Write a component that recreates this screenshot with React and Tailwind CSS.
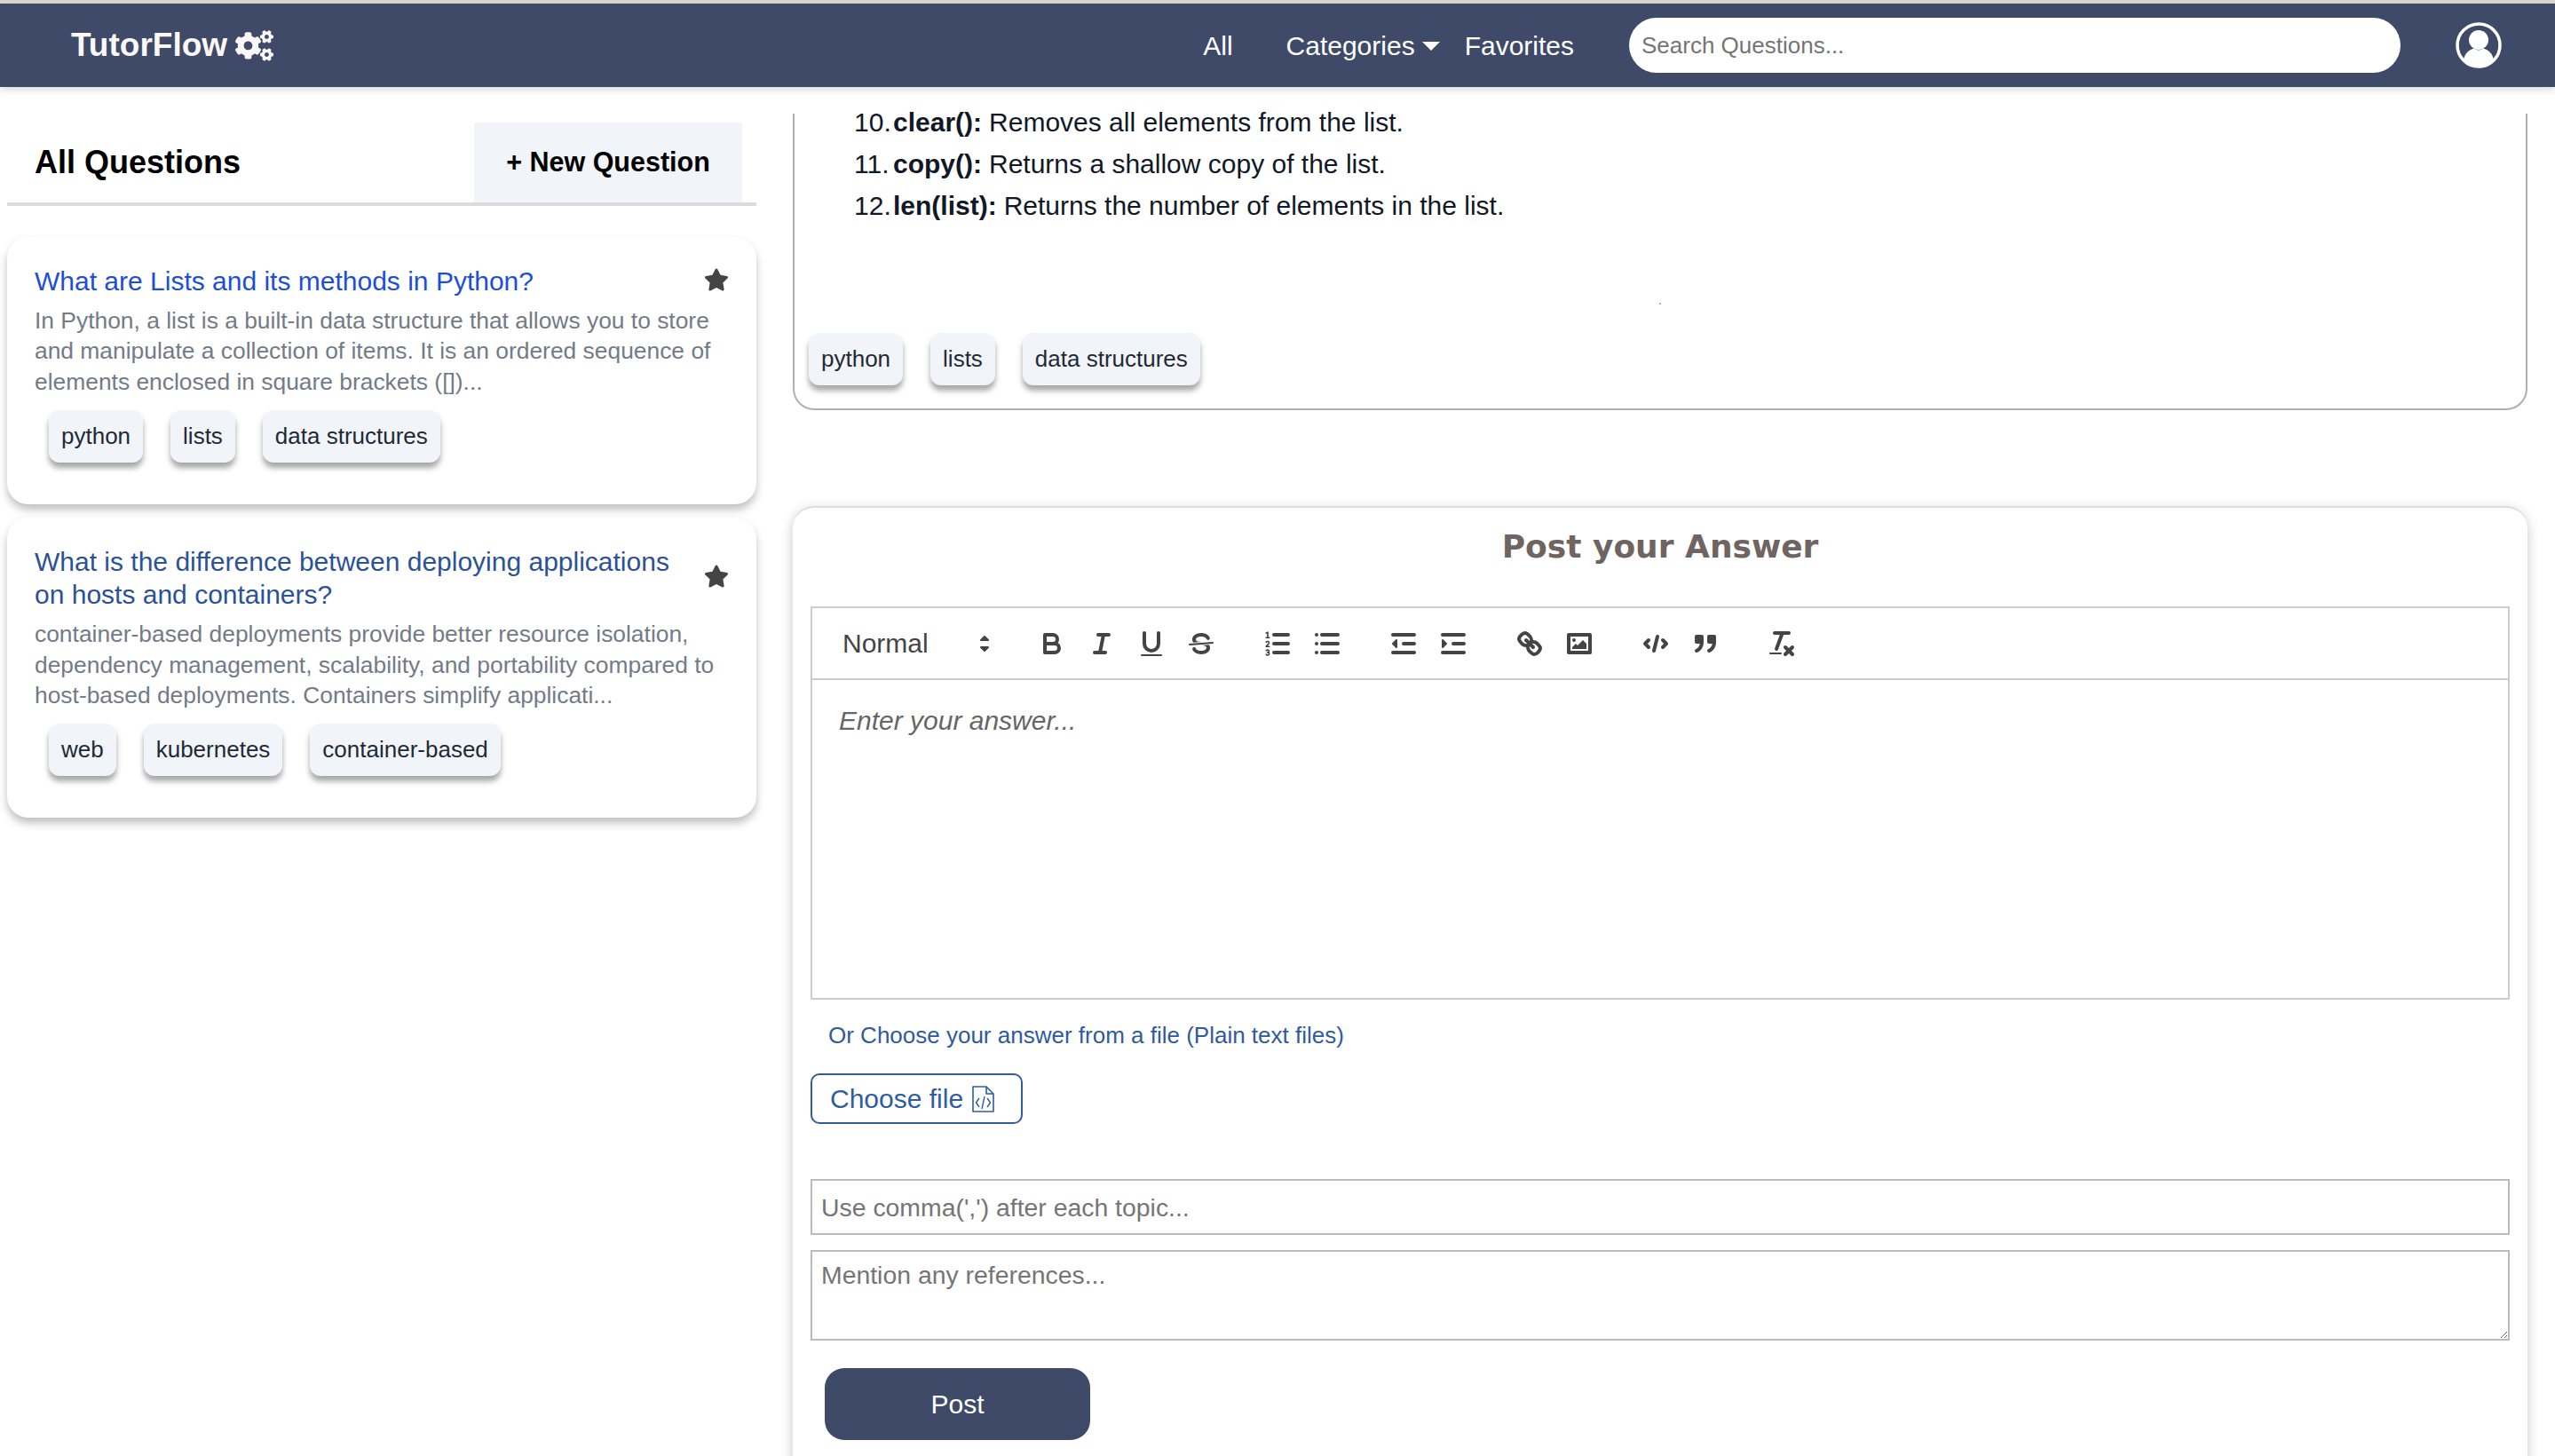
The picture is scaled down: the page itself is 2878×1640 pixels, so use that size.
import React from 'react'
import { FaCogs, FaStar } from 'react-icons/fa'

const Tag = ({ label }) => (
  <span className="h-[59px] px-[14px] flex items-center bg-[#f1f5f9] rounded-[12px] text-[26px] text-[#1f2937] shadow-[0_6px_6px_rgba(0,0,0,0.35)]">
    {label}
  </span>
)

const Tags = ({ items }) => (
  <div className="flex gap-[31px]">
    {items.map((t) => (
      <Tag key={t} label={t} />
    ))}
  </div>
)

const QuestionCard = ({ title, titleColor, body, tags }) => (
  <div className="relative bg-white rounded-[24px] pt-[31px] pb-[47px] pl-[31px] pr-[31px] shadow-[0_6px_10px_rgba(0,0,0,0.25)]">
    <div className="flex items-center justify-between">
      <h3 className={`w-[740px] text-[30px] leading-[37px] ${titleColor}`}>{title}</h3>
      <FaStar className="text-[28px] text-[#444444] shrink-0 mt-[-4px]" />
    </div>
    <p className="mt-[9px] text-[26.4px] leading-[34.4px] text-[#737b88] whitespace-pre-line">{body}</p>
    <div className="mt-[15px] ml-[16px]">
      <Tags items={tags} />
    </div>
  </div>
)

const Icon = ({ children }) => (
  <button className="w-[56px] h-[48px] flex items-center justify-center">
    <svg
      viewBox="0 0 18 18"
      className="w-[36px] h-[36px]"
      fill="none"
      stroke="#444444"
      strokeWidth="2"
      strokeLinecap="round"
      strokeLinejoin="round"
    >
      {children}
    </svg>
  </button>
)

const ListItem = ({ n, name, text }) => (
  <li className="flex h-[47px] items-center text-[30px] text-[#111827]">
    <span className="w-[44px]">{n}.</span>
    <b className="font-bold mr-[8px]">{name}</b>
    <span>{text}</span>
  </li>
)

const Toolbar = () => (
  <div className="flex items-center h-[81px] pl-[16px] border-b-2 border-[#cccccc]">
    <div className="w-[196px] mr-[30px] pl-[18px] flex items-center justify-between text-[30px] text-[#444444]">
      <span>Normal</span>
      <svg viewBox="0 0 18 18" className="w-[36px] h-[36px]" fill="#444444" stroke="#444444" strokeWidth="1" strokeLinejoin="round">
        <polygon points="7 11 9 13 11 11 7 11" />
        <polygon points="7 7 9 5 11 7 7 7" />
      </svg>
    </div>
    <div className="flex mr-[30px]">
      <Icon>
        <path d="M5,4H9.5A2.5,2.5,0,0,1,12,6.5v0A2.5,2.5,0,0,1,9.5,9H5A0,0,0,0,1,5,9V4A0,0,0,0,1,5,4Z" />
        <path d="M5,9h5.5A2.5,2.5,0,0,1,13,11.5v0A2.5,2.5,0,0,1,10.5,14H5a0,0,0,0,1,0,0V9A0,0,0,0,1,5,9Z" />
      </Icon>
      <Icon>
        <line x1="7" x2="13" y1="4" y2="4" />
        <line x1="5" x2="11" y1="14" y2="14" />
        <line x1="8" x2="10" y1="14" y2="4" />
      </Icon>
      <Icon>
        <path d="M5,3V9a4.012,4.012,0,0,0,4,4H9a4.012,4.012,0,0,0,4-4V3" />
        <rect fill="#444444" stroke="none" height="1" rx="0.5" ry="0.5" width="12" x="3" y="15" />
      </Icon>
      <Icon>
        <line strokeWidth="1" x1="15.5" x2="2.5" y1="8.5" y2="9.5" />
        <path fill="#444444" stroke="none" d="M9.007,8C6.542,7.791,6,7.519,6,6.5,6,5.792,7.283,5,9,5c1.571,0,2.765.679,2.969,1.309a1,1,0,0,0,1.9-.617C13.356,4.106,11.354,3,9,3,6.2,3,4,4.538,4,6.5a3.2,3.2,0,0,0,.5,1.843Z" />
        <path fill="#444444" stroke="none" d="M8.984,10C11.457,10.208,12,10.479,12,11.5c0,.708-1.283,1.5-3,1.5-1.571,0-2.765-.679-2.969-1.309a1,1,0,1,0-1.9.617C4.644,13.894,6.646,15,9,15c2.8,0,5-1.538,5-3.5a3.2,3.2,0,0,0-.5-1.843Z" />
      </Icon>
    </div>
    <div className="flex mr-[30px]">
      <Icon>
        <line x1="7" x2="15" y1="4" y2="4" />
        <line x1="7" x2="15" y1="9" y2="9" />
        <line x1="7" x2="15" y1="14" y2="14" />
        <path strokeWidth="0.8" d="M2.6,3L3.5,2.6V5.6M2.6,5.6H4.4" />
        <path strokeWidth="0.8" d="M2.6,8.2C3,7.5,4.4,7.6,4.3,8.6C4.2,9.3,2.9,9.7,2.6,10.6H4.4" />
        <path strokeWidth="0.8" d="M2.6,12.8C3.2,12.3,4.4,12.6,4.2,13.4C4.1,13.8,3.7,13.9,3.3,13.9C3.8,13.9,4.4,14.2,4.3,14.8C4.1,15.6,3,15.6,2.6,15.1" />
      </Icon>
      <Icon>
        <line x1="6" x2="15" y1="4" y2="4" />
        <line x1="6" x2="15" y1="9" y2="9" />
        <line x1="6" x2="15" y1="14" y2="14" />
        <line x1="3" x2="3" y1="4" y2="4" />
        <line x1="3" x2="3" y1="9" y2="9" />
        <line x1="3" x2="3" y1="14" y2="14" />
      </Icon>
    </div>
    <div className="flex mr-[30px]">
      <Icon>
        <line x1="3" x2="15" y1="14" y2="14" />
        <line x1="3" x2="15" y1="4" y2="4" />
        <line x1="9" x2="15" y1="9" y2="9" />
        <polygon fill="#444444" strokeWidth="1" points="5 7 5 11 3 9 5 7" />
      </Icon>
      <Icon>
        <line x1="3" x2="15" y1="14" y2="14" />
        <line x1="3" x2="15" y1="4" y2="4" />
        <line x1="9" x2="15" y1="9" y2="9" />
        <polygon fill="#444444" strokeWidth="1" points="3 7 3 11 5 9 3 7" />
      </Icon>
    </div>
    <div className="flex mr-[30px]">
      <Icon>
        <line x1="7" x2="11" y1="7" y2="11" />
        <path d="M8.9,4.577a3.476,3.476,0,0,1,.36,4.679A3.476,3.476,0,0,1,4.577,8.9C3.185,7.5,2.035,6.4,4.217,4.217S7.5,3.185,8.9,4.577Z" />
        <path d="M13.423,9.1a3.476,3.476,0,0,0-4.679-.36,3.476,3.476,0,0,0,.36,4.679c1.392,1.392,2.5,2.542,4.679.36S14.815,10.5,13.423,9.1Z" />
      </Icon>
      <Icon>
        <rect height="10" width="12" x="3" y="4" />
        <circle fill="#444444" stroke="none" cx="6" cy="7" r="1" />
        <polyline fill="#444444" stroke="none" points="5 12 5 11 7 9 8 10 11 7 13 9 13 12 5 12" />
      </Icon>
    </div>
    <div className="flex mr-[30px]">
      <Icon>
        <polyline points="5 7 3 9 5 11" />
        <polyline points="13 7 15 9 13 11" />
        <line x1="10" x2="8" y1="5" y2="13" />
      </Icon>
      <Icon>
        <rect fill="#444444" height="3" width="3" x="4" y="5" />
        <rect fill="#444444" height="3" width="3" x="11" y="5" />
        <path d="M7,8c0,4.031-3,5-3,5" />
        <path d="M14,8c0,4.031-3,5-3,5" />
      </Icon>
    </div>
    <Icon>
      <line x1="5" x2="13" y1="3" y2="3" />
      <line x1="6" x2="9.35" y1="12" y2="3" />
      <line x1="11" x2="15" y1="11" y2="15" />
      <line x1="15" x2="11" y1="11" y2="15" />
      <rect fill="#444444" stroke="none" height="1" rx="0.5" ry="0.5" width="7" x="2" y="14" />
    </Icon>
  </div>
)

const App = () => {
  return (
    <div className="w-[2878px] h-[1640px] overflow-hidden bg-white font-['Liberation_Sans',sans-serif]">
      <div className="h-[4px] bg-[#dcd3cd]" />
      <nav className="h-[94px] bg-[#3e4a68] flex items-center pl-[80px] shadow-[0_4px_8px_rgba(0,0,0,0.12)] relative z-10">
        <div className="flex items-center text-[#fdf8f8]">
          <span className="text-[37px] font-bold">TutorFlow</span>
          <FaCogs className="ml-[9px] text-[43px]" />
        </div>
        <div className="ml-auto flex items-center text-[30px] text-white">
          <a className="mr-[60px]">All</a>
          <a className="flex items-center mr-[28px]">
            Categories
            <span className="ml-[8px] mt-[2px] w-0 h-0 border-x-[10px] border-x-transparent border-t-[10px] border-t-white" />
          </a>
          <a>Favorites</a>
          <input
            placeholder="Search Questions..."
            className="ml-[62px] w-[869px] h-[62px] px-[14px] rounded-full bg-white text-[26px] placeholder:text-[#757575] outline-none"
          />
          <svg viewBox="0 0 52 52" className="ml-[62px] mr-[60px] w-[52px] h-[52px]" fill="#ffffff">
            <circle cx="26" cy="26" r="24" fill="none" stroke="#ffffff" strokeWidth="3.5" />
            <circle cx="26" cy="20" r="11" />
            <path d="M9,43C10,34,17,30.500,21,29.500C24,32,28,32,31,29.500C35,30.500,42,34,43,43C34,52,18,52,9,43Z" />
          </svg>
        </div>
      </nav>

      <div className="flex">
        <aside className="w-[844px] ml-[8px] shrink-0">
          <div className="mt-[40px] h-[94px] border-b-[4px] border-[#dcdce0] flex justify-between pl-[31px] pr-[16px]">
            <h2 className="self-center text-[36px] font-bold text-black">All Questions</h2>
            <button className="w-[302px] h-[90px] bg-[#f1f5f9] text-[30.5px] font-bold text-black">+ New Question</button>
          </div>
          <div className="mt-[35px] flex flex-col gap-[15px]">
            <QuestionCard
              title="What are Lists and its methods in Python?"
              titleColor="text-[#1d4ed8]"
              body={'In Python, a list is a built-in data structure that allows you to store\nand manipulate a collection of items. It is an ordered sequence of\nelements enclosed in square brackets ([])...'}
              tags={['python', 'lists', 'data structures']}
            />
            <QuestionCard
              title="What is the difference between deploying applications on hosts and containers?"
              titleColor="text-[#2b5297]"
              body={'container-based deployments provide better resource isolation,\ndependency management, scalability, and portability compared to\nhost-based deployments. Containers simplify applicati...'}
              tags={['web', 'kubernetes', 'container-based']}
            />
          </div>
        </aside>

        <main className="w-[1954px] ml-[41px] shrink-0">
          <section className="mt-[30px] h-[334px] flex flex-col border-x-2 border-b-2 border-[#b3aeb0] rounded-b-[24px] pl-[16px]">
            <ol className="pl-[51px] mt-[-14px]">
              <ListItem n="10" name="clear():" text="Removes all elements from the list." />
              <ListItem n="11" name="copy():" text="Returns a shallow copy of the list." />
              <ListItem n="12" name="len(list):" text="Returns the number of elements in the list." />
            </ol>
            <div className="flex-1 flex justify-center pt-[86px] pr-[16px]">
              <span className="w-[2px] h-[2px] rounded-full bg-[#999999]" />
            </div>
            <div className="mb-[26px]">
              <Tags items={['python', 'lists', 'data structures']} />
            </div>
          </section>

          <section className="mt-[108px] h-[1100px] bg-white border-t-2 border-[#dddddd] rounded-t-[24px] px-[20px] shadow-[0_4px_14px_rgba(0,0,0,0.22)]">
            <h2 className="h-[111px] pt-[17px] text-center text-[36px] font-bold text-[#6f6462] font-['DejaVu_Sans',sans-serif]">
              Post your Answer
            </h2>
            <div className="border-2 border-[#cccccc]">
              <Toolbar />
              <div className="h-[358px] px-[30px] pt-[23px] text-[30px] italic text-[#666666]">Enter your answer...</div>
            </div>
            <label className="block mt-[21px] ml-[20px] text-[26px] text-[#2f5a9e]">
              Or Choose your answer from a file (Plain text files)
            </label>
            <button className="mt-[23px] w-[239px] h-[57px] flex items-center pl-[20px] border-2 border-[#2f5d9f] rounded-[10px] text-[30px] text-[#2f5d9f]">
              Choose file
              <svg viewBox="0 0 26 30" className="ml-[9px] w-[26px] h-[30px]" fill="none" stroke="#2f5d9f" strokeWidth="1.6" strokeLinejoin="round">
                <path d="M2,1H17L25,9V29H2Z" />
                <path d="M17,1V9H25" />
                <path d="M9,14L5.500,19L9,24M18,14L21.500,19L18,24M15,12L12,26" strokeWidth="1.400" />
              </svg>
            </button>
            <input
              placeholder="Use comma(',') after each topic..."
              className="block mt-[62px] w-full h-[63px] px-[10px] pt-[2px] border-2 border-[#bbbbbb] text-[28.4px] placeholder:text-[#757575] outline-none"
            />
            <textarea
              placeholder="Mention any references..."
              className="block mt-[17px] w-full h-[102px] px-[10px] py-[5px] border-2 border-[#bbbbbb] text-[28.4px] placeholder:text-[#757575] outline-none resize-y"
            />
            <button className="block mt-[31px] ml-[16px] w-[299px] h-[81px] rounded-[22px] bg-[#3e4a68] text-[30px] text-white">
              Post
            </button>
          </section>
        </main>
      </div>
    </div>
  )
}

export default App
